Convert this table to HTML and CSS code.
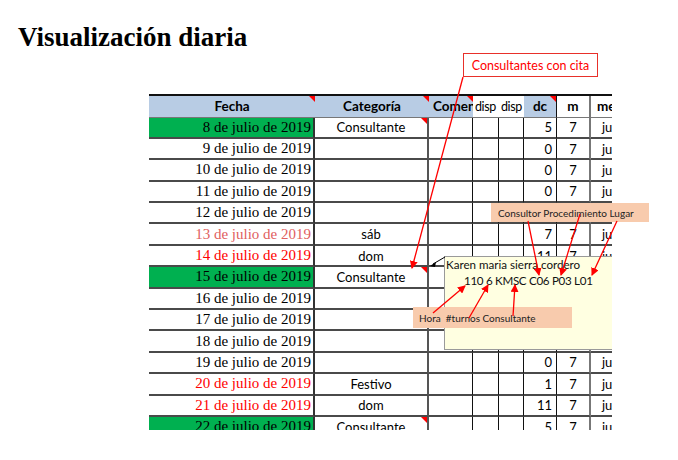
FILE: index.html
```html
<!DOCTYPE html>
<html lang="es">
<head>
<meta charset="utf-8">
<title>Visualización diaria</title>
<link rel="stylesheet" href="styles.css">
</head>
<body>
<div class="page">
  <h1 class="title">Visualización diaria</h1>
  <div class="sheet">
    <div class="row head">
      <div class="c fecha blue mark hc">Fecha</div>
      <div class="c cat blue mark hc">Categoría</div>
      <div class="c come blue mark">Comentarios</div>
      <div class="c disp">disp</div>
      <div class="c disp2">disp</div>
      <div class="c dc blue mark hc">dc</div>
      <div class="c m hc">m</div>
      <div class="c mes">mes</div>
    </div>

    <div class="row"><div class="c fecha green">8 de julio de 2019</div><div class="c cat mark">Consultante</div><div class="c come"></div><div class="c disp"></div><div class="c disp2"></div><div class="c dc">5</div><div class="c m">7</div><div class="c mes">jul</div></div>
    <div class="row"><div class="c fecha">9 de julio de 2019</div><div class="c cat"></div><div class="c come"></div><div class="c disp"></div><div class="c disp2"></div><div class="c dc">0</div><div class="c m">7</div><div class="c mes">jul</div></div>
    <div class="row"><div class="c fecha">10 de julio de 2019</div><div class="c cat"></div><div class="c come"></div><div class="c disp"></div><div class="c disp2"></div><div class="c dc">0</div><div class="c m">7</div><div class="c mes">jul</div></div>
    <div class="row"><div class="c fecha">11 de julio de 2019</div><div class="c cat"></div><div class="c come"></div><div class="c disp"></div><div class="c disp2"></div><div class="c dc">0</div><div class="c m">7</div><div class="c mes">jul</div></div>
    <div class="row"><div class="c fecha">12 de julio de 2019</div><div class="c cat"></div><div class="c come"></div><div class="c disp"></div><div class="c disp2"></div><div class="c dc">0</div><div class="c m">7</div><div class="c mes">jul</div></div>
    <div class="row"><div class="c fecha pink">13 de julio de 2019</div><div class="c cat">sáb</div><div class="c come"></div><div class="c disp"></div><div class="c disp2"></div><div class="c dc">7</div><div class="c m">7</div><div class="c mes">jul</div></div>
    <div class="row"><div class="c fecha red">14 de julio de 2019</div><div class="c cat">dom</div><div class="c come"></div><div class="c disp"></div><div class="c disp2"></div><div class="c dc">11</div><div class="c m">7</div><div class="c mes">jul</div></div>
    <div class="row"><div class="c fecha green">15 de julio de 2019</div><div class="c cat mark">Consultante</div><div class="c come"></div><div class="c disp"></div><div class="c disp2"></div><div class="c dc">5</div><div class="c m">7</div><div class="c mes">jul</div></div>
    <div class="row"><div class="c fecha">16 de julio de 2019</div><div class="c cat"></div><div class="c come"></div><div class="c disp"></div><div class="c disp2"></div><div class="c dc">0</div><div class="c m">7</div><div class="c mes">jul</div></div>
    <div class="row"><div class="c fecha">17 de julio de 2019</div><div class="c cat"></div><div class="c come"></div><div class="c disp"></div><div class="c disp2"></div><div class="c dc">0</div><div class="c m">7</div><div class="c mes">jul</div></div>
    <div class="row"><div class="c fecha">18 de julio de 2019</div><div class="c cat"></div><div class="c come"></div><div class="c disp"></div><div class="c disp2"></div><div class="c dc">0</div><div class="c m">7</div><div class="c mes">jul</div></div>
    <div class="row"><div class="c fecha">19 de julio de 2019</div><div class="c cat"></div><div class="c come"></div><div class="c disp"></div><div class="c disp2"></div><div class="c dc">0</div><div class="c m">7</div><div class="c mes">jul</div></div>
    <div class="row"><div class="c fecha red">20 de julio de 2019</div><div class="c cat">Festivo</div><div class="c come"></div><div class="c disp"></div><div class="c disp2"></div><div class="c dc">1</div><div class="c m">7</div><div class="c mes">jul</div></div>
    <div class="row"><div class="c fecha red">21 de julio de 2019</div><div class="c cat">dom</div><div class="c come"></div><div class="c disp"></div><div class="c disp2"></div><div class="c dc">11</div><div class="c m">7</div><div class="c mes">jul</div></div>
    <div class="row"><div class="c fecha green">22 de julio de 2019</div><div class="c cat mark">Consultante</div><div class="c come"></div><div class="c disp"></div><div class="c disp2"></div><div class="c dc">5</div><div class="c m">7</div><div class="c mes">jul</div></div>

    <div class="note">
      <div class="note-line">Karen maria sierra cordero</div>
      <div class="note-line note-code">110 6 KMSC C06 P03 L01</div>
    </div>
  </div>

  <div class="cita">Consultantes con cita</div>
  <div class="tag tag-top">Consultor Procedimiento Lugar</div>
  <div class="tag tag-bottom">Hora&nbsp; #turnos Consultante</div>

  <svg class="arrows" width="678" height="460" viewBox="0 0 678 460">
    <defs>
      <marker id="ah" markerWidth="8" markerHeight="8" refX="7" refY="4" orient="auto" markerUnits="userSpaceOnUse">
        <path d="M0,0 L8,4 L0,8 Z" fill="#ff0000"/>
      </marker>
    </defs>
    <g stroke="#ff0000" stroke-width="1.3" fill="none" marker-end="url(#ah)">
      <line x1="463" y1="77" x2="412" y2="268"/>
      <line x1="528" y1="221" x2="539" y2="275"/>
      <line x1="580" y1="214" x2="561" y2="275"/>
      <line x1="617" y1="221" x2="592" y2="275"/>
      <line x1="433" y1="313" x2="465" y2="286"/>
      <line x1="469" y1="318" x2="488" y2="285"/>
      <line x1="513" y1="316" x2="515" y2="285"/>
    </g>
    <line x1="445" y1="257" x2="433" y2="264" stroke="#000" stroke-width="1"/>
    <path d="M430,266 L436,262 L435,267 Z" fill="#000"/>
  </svg>
</div>
</body>
</html>
```

FILE: styles.css
```css
html, body {
  margin: 0;
  padding: 0;
  background: #ffffff;
}

.page {
  position: relative;
  width: 678px;
  height: 460px;
  overflow: hidden;
}

.title {
  margin: 21px 0 0 18px;
  font-family: "Liberation Serif", "Times New Roman", serif;
  font-weight: bold;
  font-size: 27px;
  line-height: 32px;
  color: #000;
}

.sheet {
  position: relative;
  margin: 41px 0 0 149px;
  width: 463px;
  height: 336px;
  overflow: hidden;
  font-family: Lato, "Liberation Sans", sans-serif;
  font-size: 13px;
  color: #000;
}

.row {
  display: grid;
  grid-template-columns: 166px 114px 44px 26px 25px 33px 34px 60px;
  height: 21.4px;
}

.row.head {
  height: 21.5px;
  border-top: 2px solid #111;
}

.c {
  position: relative;
  box-sizing: border-box;
  display: flex;
  align-items: center;
  padding: 0 3px;
  white-space: nowrap;
  overflow: hidden;
  border-bottom: 2px solid #4a4a4a;
}

.fecha {
  justify-content: flex-end;
  padding-right: 2px;
  font-family: "Liberation Serif", "Times New Roman", serif;
  font-size: 15px;
  border-right: 2px solid #333;
}

.cat {
  justify-content: center;
  border-right: 2px solid #555;
}

.come {
  border-right: 1px solid #111;
}

.disp, .disp2 {
  border-right: 1px solid #111;
}

.dc {
  justify-content: flex-end;
  padding-right: 4px;
  border-right: 1px solid #111;
}

.m {
  justify-content: center;
  border-right: 2px solid #777;
}

.mes {
  padding-left: 11px;
}

.head .c {
  border-bottom: 1px solid #777;
  font-weight: bold;
  font-family: Lato, "Liberation Sans", sans-serif;
  font-size: 13.5px;
}

.head .hc {
  justify-content: center;
  padding-right: 3px;
}

.head .fecha,
.head .cat,
.head .come,
.head .disp,
.head .disp2 {
  border-right: none;
}

.head .come {
  padding-left: 4px;
}

.head .disp,
.head .disp2 {
  font-weight: normal;
  font-size: 12.5px;
  letter-spacing: -0.4px;
  padding: 0 0 0 2px;
}

.head .dc {
  padding-right: 3px;
}

.head .mes {
  padding-left: 6px;
}

.blue {
  background: #b8cce4;
}

.green {
  background: #00b050;
}

.pink {
  color: #df6060;
}

.red {
  color: #ff0000;
}

.mark::after {
  content: "";
  position: absolute;
  top: 0;
  right: 0;
  width: 0;
  height: 0;
  border-top: 6px solid #ff0000;
  border-left: 6px solid transparent;
}

.note {
  position: absolute;
  left: 295px;
  top: 162px;
  width: 180px;
  height: 94px;
  box-sizing: border-box;
  background: #ffffe1;
  border: 1px solid #9a9a9a;
  padding: 0 0 0 1px;
  font-family: Lato, "Liberation Sans", sans-serif;
  font-size: 11.6px;
  line-height: 15.5px;
  color: #111;
  white-space: nowrap;
}

.note-code {
  padding-left: 18px;
  letter-spacing: -0.3px;
}

.cita {
  position: absolute;
  left: 463px;
  top: 53px;
  width: 135px;
  height: 24px;
  box-sizing: border-box;
  border: 1.5px solid #e8302a;
  background: #fff;
  color: #ff0000;
  font-family: Lato, "Liberation Sans", sans-serif;
  font-size: 12.5px;
  display: flex;
  align-items: center;
  justify-content: center;
}

.tag {
  position: absolute;
  box-sizing: border-box;
  background: #f8cbad;
  color: #222;
  font-family: Lato, "Liberation Sans", sans-serif;
  font-size: 10px;
  white-space: nowrap;
  display: flex;
  align-items: center;
}

.tag-top {
  left: 491px;
  top: 203px;
  width: 158px;
  height: 19px;
  padding-left: 7px;
}

.tag-bottom {
  left: 413px;
  top: 307px;
  width: 159px;
  height: 21px;
  padding-left: 6px;
}

.arrows {
  position: absolute;
  left: 0;
  top: 0;
  pointer-events: none;
}
```
